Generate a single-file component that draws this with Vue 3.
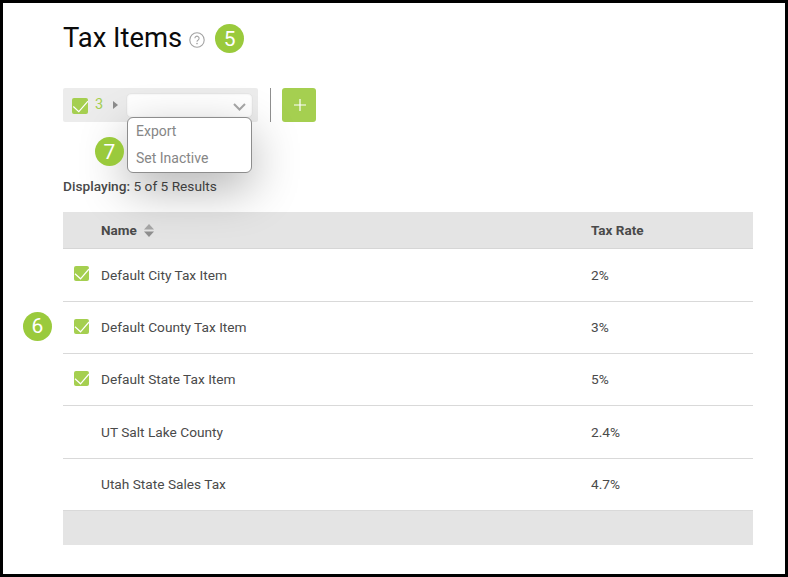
<script setup>
const rows = [
  { name: 'Default City Tax Item', rate: '2%', checked: true, h: 53 },
  { name: 'Default County Tax Item', rate: '3%', checked: true, h: 52, badge: '6' },
  { name: 'Default State Tax Item', rate: '5%', checked: true, h: 52 },
  { name: 'UT Salt Lake County', rate: '2.4%', checked: false, h: 53 },
  { name: 'Utah State Sales Tax', rate: '4.7%', checked: false, h: 52 },
]
</script>

<template>
  <div class="frame">
    <header class="title-row">
      <h1>Tax Items</h1>
      <svg class="help" width="16" height="16" viewBox="0 0 16 16">
        <circle cx="8" cy="8" r="7.2" fill="none" stroke="#a3a3a3" stroke-width="1.1" />
        <path d="M5.9 6.3a2.1 2.1 0 1 1 3.3 1.7c-.8.5-1.2.9-1.2 1.7" fill="none" stroke="#a3a3a3" stroke-width="1.1" />
        <circle cx="8" cy="11.6" r=".8" fill="#a3a3a3" />
      </svg>
      <span class="badge">5</span>
    </header>

    <div class="toolbar-row">
      <div class="toolbar">
        <span class="check check-top">
          <svg width="16" height="16" viewBox="0 0 16 16"><path d="M1.3 8.5l5.5 5.2L16 3.2" fill="none" stroke="#fff" stroke-width="1.2" /></svg>
        </span>
        <span class="count">3</span>
        <svg class="caret" width="5" height="8" viewBox="0 0 5 8"><path d="M0 0l5 4-5 4z" fill="#8c8c8c" /></svg>
        <div class="select">
          <svg width="13" height="8" viewBox="0 0 13 8"><path d="M1 1l5.5 5.5L12 1" fill="none" stroke="#a8a8a8" stroke-width="2" /></svg>
        </div>
        <div class="menu">
          <div class="menu-item">Export</div>
          <div class="menu-item">Set Inactive</div>
        </div>
      </div>
      <span class="divider"></span>
      <button class="add" type="button">
        <svg width="12" height="12" viewBox="0 0 12 12"><path d="M6 0v12M0 6h12" stroke="#fff" stroke-width="1.2" fill="none" /></svg>
      </button>
    </div>

    <div class="displaying">
      <span class="badge badge-seven">7</span>
      <span class="disp-label">Displaying:</span> 5 of 5 Results
    </div>

    <div class="table">
      <div class="head">
        <div class="col-name">
          Name
          <svg class="sort" width="10" height="13" viewBox="0 0 10 13">
            <path d="M5 0l5 5.6H0z" fill="#a6a6a6" />
            <path d="M5 13L0 7.4h10z" fill="#8f8f8f" />
          </svg>
        </div>
        <div class="col-rate">Tax Rate</div>
      </div>
      <div v-for="r in rows" :key="r.name" class="row" :style="{ height: r.h + 'px' }">
        <span v-if="r.badge" class="badge badge-six">{{ r.badge }}</span>
        <span class="check-cell">
          <span v-if="r.checked" class="check">
            <svg width="15" height="15" viewBox="0 0 15 15"><path d="M1 7.8l5.5 5L15 3" fill="none" stroke="#fff" stroke-width="1.2" /></svg>
          </span>
        </span>
        <div class="col-name">{{ r.name }}</div>
        <div class="col-rate">{{ r.rate }}</div>
      </div>
      <div class="foot"></div>
    </div>
  </div>
</template>

<style>
html, body { margin: 0; padding: 0; background: #fff; }
</style>

<style scoped>
.frame {
  box-sizing: border-box;
  width: 788px;
  height: 577px;
  border: 3px solid #000;
  padding: 0 32px 0 60px;
  background: #fff;
  font-family: Roboto, "Liberation Sans", sans-serif;
  font-size: 13.7px;
  color: #4a4a4a;
  overflow: hidden;
}
.title-row {
  display: flex;
  align-items: center;
  height: 29px;
  margin-top: 21px;
}
h1 {
  margin: 0;
  font-size: 27.4px;
  font-weight: 400;
  line-height: 29px;
  color: #0b0b0b;
}
.help { margin-left: 7px; margin-top: 3px; }
.badge {
  display: flex;
  align-items: center;
  justify-content: center;
  width: 29px;
  height: 29px;
  border-radius: 50%;
  background: #9aca3c;
  color: #fff;
  font-size: 21px;
  flex: none;
}
.title-row .badge { margin-left: 10px; }
.toolbar-row {
  display: flex;
  align-items: stretch;
  height: 34px;
  margin-top: 35px;
}
.toolbar {
  position: relative;
  width: 195px;
  background: #ececec;
  border-radius: 2px;
  display: flex;
  align-items: center;
  padding-left: 9px;
  box-sizing: border-box;
}
.check {
  display: flex;
  align-items: center;
  justify-content: center;
  width: 15px;
  height: 15px;
  background: #a5cf50;
  border-radius: 2px;
}
.check-top { width: 16px; height: 16px; margin-top: 1px; }
.count { width: 8px; margin-left: 7px; color: #a5cf50; font-size: 14.5px; margin-top: -1px; }
.caret { margin-left: 10px; margin-top: -1px; }
.select {
  box-sizing: border-box;
  width: 127px;
  height: 25px;
  margin-left: 8px;
  background: #fff;
  border: 1px solid #e6e6e6;
  border-radius: 5px;
  box-shadow: inset 0 0 2px rgba(0,0,0,.1);
  display: flex;
  align-items: center;
  justify-content: flex-end;
  padding: 4px 6px 0 0;
}
.menu {
  position: absolute;
  left: 64px;
  top: 29px;
  box-sizing: border-box;
  width: 125px;
  height: 56px;
  padding: 1px 0;
  background: #fff;
  border: 1px solid #8d8d8d;
  border-radius: 6px;
  box-shadow: 0 16px 48px rgba(0,0,0,.3);
  z-index: 2;
}
.menu-item {
  height: 27px;
  line-height: 25px;
  padding-left: 8px;
  color: #868686;
  font-size: 14px;
}
.divider {
  width: 1px;
  background: #8f8f8f;
  margin-left: 12px;
}
.add {
  width: 34px;
  margin-left: 11px;
  padding: 0 0 0 1px;
  border: 0;
  border-radius: 3px;
  background: #a5cf50;
  display: flex;
  align-items: center;
  justify-content: center;
}
.displaying {
  position: relative;
  margin-top: 56px;
  height: 16px;
  line-height: 16px;
}
.disp-label { font-weight: 500; }
.badge-seven {
  position: absolute;
  left: 32px;
  top: -41px;
  z-index: 3;
}
.table { margin-top: 18px; }
.head {
  display: flex;
  align-items: center;
  box-sizing: border-box;
  height: 37px;
  padding-left: 38px;
  background: #e4e4e4;
  border-bottom: 1px solid #d6d6d6;
  font-weight: 700;
  font-size: 13.5px;
}
.head .col-name { display: flex; align-items: center; gap: 7px; }
.col-name { width: 490px; }
.row {
  position: relative;
  display: flex;
  align-items: center;
  box-sizing: border-box;
  border-bottom: 1px solid #d9d9d9;
  line-height: 17px;
}
.check-cell { width: 38px; padding-left: 11px; box-sizing: border-box; flex: none; margin-top: -3px; }
.badge-six {
  position: absolute;
  left: -40px;
  top: 10px;
}
.foot { height: 34px; background: #e4e4e4; }
</style>
